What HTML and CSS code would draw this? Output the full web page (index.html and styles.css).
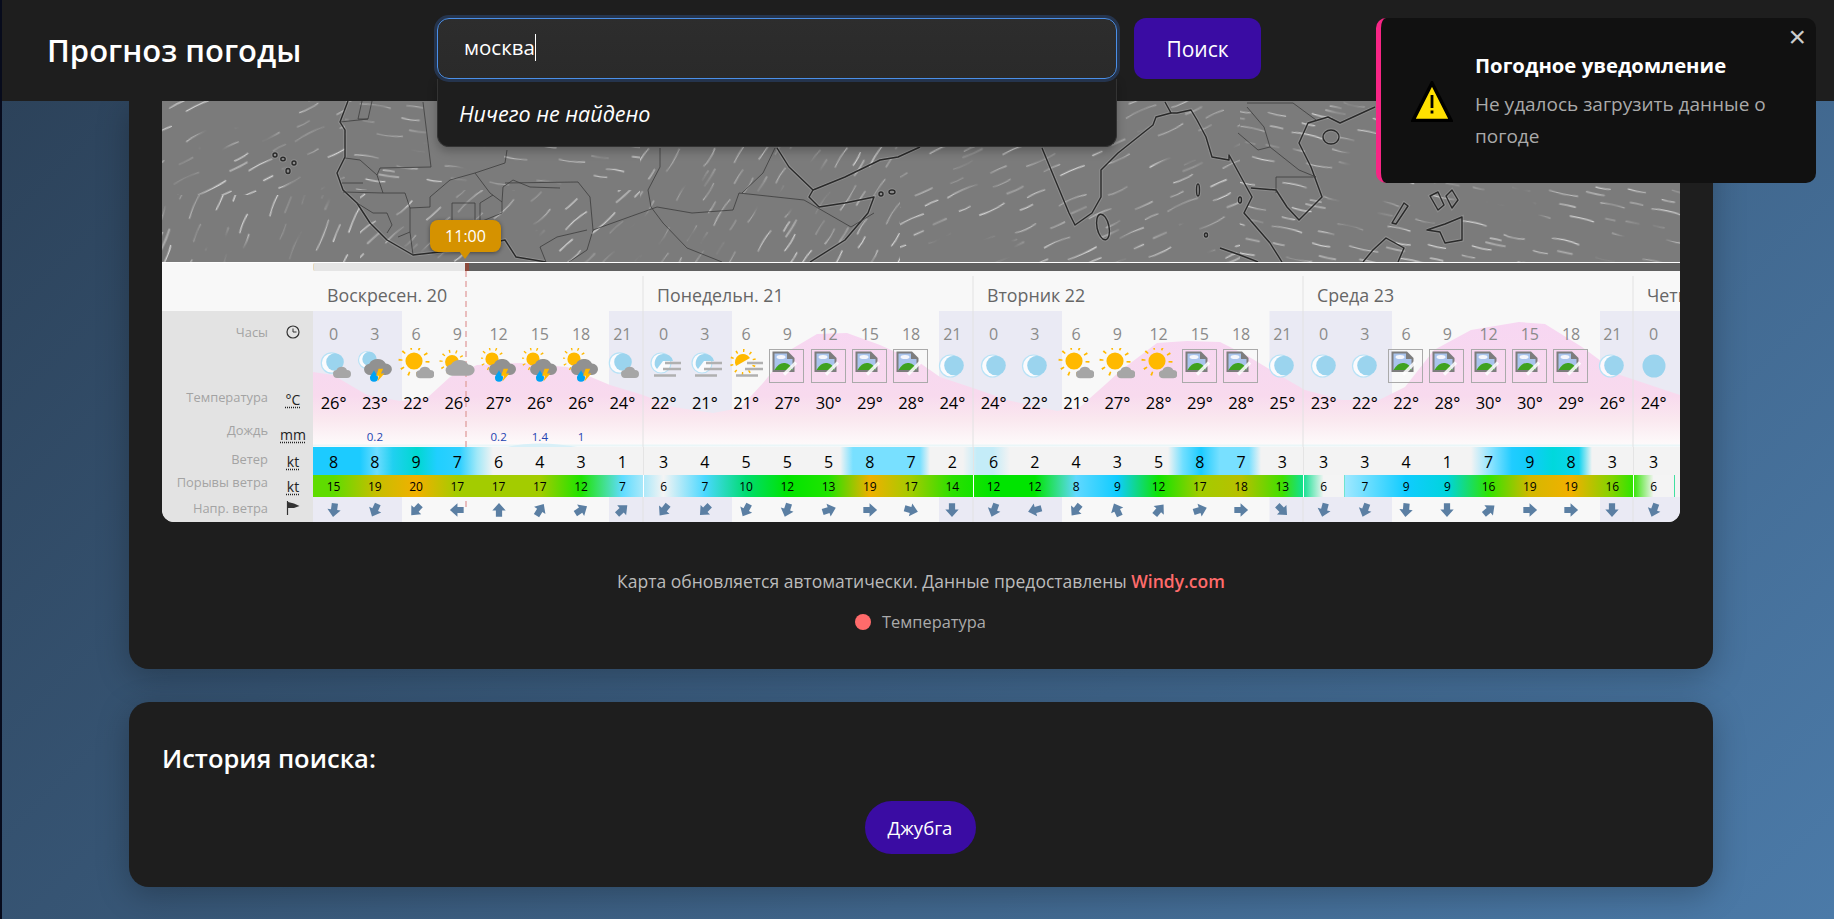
FILE: index.html
```html
<!DOCTYPE html>
<html lang="ru">
<head>
<meta charset="utf-8">
<title>Прогноз погоды</title>
<link rel="stylesheet" href="styles.css">
</head>
<body>
<svg class="defs" width="0" height="0" aria-hidden="true">
  <defs>
    <path id="cl" d="M4 13a4 4 0 0 1-.6-7.95A6 6 0 0 1 14 5a4 4 0 0 1 0 8z" fill="#a6a6a6"/>
    <path id="cl2" d="M4 13a4 4 0 0 1-.6-7.95A6 6 0 0 1 14 5a4 4 0 0 1 0 8z" fill="#919191"/>
    <g id="sun">
      <circle r="6.6" fill="#ffb900"/>
      <circle r="10.4" fill="none" stroke="#ffb900" stroke-width="3" stroke-dasharray="1.3 5.23"/>
    </g>
    <g id="mo">
      <circle cx="15.5" cy="15" r="10.2" fill="#fff" fill-opacity=".8" stroke="#b8e2f6" stroke-width="1.2"/>
      <circle cx="19" cy="14" r="8.8" fill="#9bd4ee"/>
    </g>
    <g id="rb">
      <path d="M0 0C1 3 3.5 4.5 3.5 6.8a3.5 3.5 0 0 1-7 0C-3.500 4.500-1 3 0 0z" fill="#00a2f2"/>
      <path d="M8-1H4L1.800 5H4.300L3 10 9 3H6z" fill="#ffb900"/>
    </g>
    <symbol id="nc" viewBox="0 0 36 36"><use href="#mo"/><use href="#cl" transform="translate(17 17)"/></symbol>
    <symbol id="nrb" viewBox="0 0 36 36">
      <circle cx="10" cy="12" r="8.500" fill="#fff" fill-opacity=".8" stroke="#b8e2f6" stroke-width="1.2"/>
      <circle cx="12.500" cy="11" r="7.200" fill="#9bd4ee"/>
      <use href="#cl2" transform="translate(7 8.500) scale(1.55 1.42)"/>
      <use href="#rb" transform="translate(17 22) scale(1.15)"/>
    </symbol>
    <symbol id="sc" viewBox="0 0 36 36"><use href="#sun" transform="translate(16 13) scale(1.3)"/><use href="#cl" transform="translate(18 17) scale(1.02)"/></symbol>
    <symbol id="sC" viewBox="0 0 36 36"><use href="#sun" transform="translate(13 14) scale(1.05)"/><use href="#cl" transform="translate(6.500 9.500) scale(1.62 1.4)"/></symbol>
    <symbol id="src" viewBox="0 0 36 36">
      <use href="#sun" transform="translate(11 11) scale(1)"/>
      <use href="#cl2" transform="translate(8 8.500) scale(1.5 1.42)"/>
      <use href="#rb" transform="translate(18 22) scale(1.15)"/>
    </symbol>
    <g id="fog" stroke="#b0b0b0" stroke-width="2.400" fill="none">
      <path d="M19 15H35M17 21H35M8 27.500H30"/>
    </g>
    <symbol id="nf" viewBox="0 0 36 36">
      <circle cx="15" cy="15" r="10" fill="#fff" fill-opacity=".8" stroke="#b8e2f6" stroke-width="1.2"/>
      <path d="M17 6a9 9 0 0 1 10 7H17l-6 8a9 9 0 0 1 6-15z" fill="#9bd4ee"/>
      <use href="#fog"/>
    </symbol>
    <symbol id="sf" viewBox="0 0 36 36">
      <g transform="translate(15 14)">
        <path d="M-7 4A8 8 0 1 1 7-4z" fill="#ffb900"/>
        <circle r="11.500" fill="none" stroke="#ffb900" stroke-width="3" stroke-dasharray="1.500 5.730" stroke-dashoffset="4"/>
      </g>
      <use href="#fog"/>
    </symbol>
    <symbol id="m" viewBox="0 0 36 36">
      <circle cx="16.500" cy="18" r="11" fill="#fff" fill-opacity=".8" stroke="#b8e2f6" stroke-width="1.200"/>
      <circle cx="20" cy="17.500" r="9.800" fill="#9bd4ee"/>
    </symbol>
    <symbol id="f" viewBox="0 0 36 36"><circle cx="18" cy="18" r="11.500" fill="#9bd4ee"/></symbol>
    <symbol id="br" viewBox="0 0 36 36">
      <rect x=".5" y="1.500" width="34" height="33" fill="none" stroke="#aaa"/>
      <path d="M3.500 3.500H19L25.500 10V24H3.500z" fill="#7d7d7d"/>
      <path d="M5.500 5.500H18V11H23.500V22H5.500z" fill="#a9c4ec"/>
      <ellipse cx="12" cy="9" rx="4.500" ry="2" fill="#f4f6fb"/>
      <path d="M5.500 22Q10 14 16 15T23.500 22z" fill="#3fa21f"/>
      <path d="M27 14.500L15 26.500" stroke="#fff" stroke-opacity=".85" stroke-width="3.200"/>
    </symbol>
    <path id="a" d="M9 1L16.500 9.500H12.500V16.500H5.500V9.500H1.500z" fill="#5b7fa3"/>
    <pattern id="st" width="230" height="120" patternUnits="userSpaceOnUse">
      <g fill="none" stroke="#fff" stroke-linecap="round" stroke-width="1.500" stroke-opacity=".68">
        <path d="M6 10q16-2 30 0"/><path d="M60 16q12 3 26 0"/><path d="M120 8q18-3 34 1"/><path d="M178 20q10 2 24 0"/>
        <path d="M24 38q14 2 24 0"/><path d="M84 46q18-2 32 1"/><path d="M146 36q14-2 28 0"/><path d="M200 48q12 1 22 0"/>
        <path d="M4 66q20-3 38 0"/><path d="M58 76q12 2 22 0"/><path d="M104 70q18 2 36 0"/><path d="M170 72q14-2 30 0"/>
        <path d="M30 100q16 2 32-1"/><path d="M90 104q10-2 22 0"/><path d="M136 96q18-1 30 1"/><path d="M192 106q12 2 28 0"/>
        <path d="M44 24q10-1 14 0"/><path d="M100 28q8 1 18 0"/><path d="M160 54q10 1 18-1"/><path d="M14 52q8 1 16 0"/><path d="M62 60q12-1 20 0"/><path d="M206 64q8-1 16 0"/>
        <path d="M10 86q8 1 14 0"/><path d="M120 84q10-1 20 0"/><path d="M180 90q6 0 12 0"/><path d="M76 114q8 1 16 0"/>
      </g>
      <g fill="none" stroke="#fff" stroke-linecap="round" stroke-width="2.400" stroke-opacity=".38">
        <path d="M40 30q14 1 24 0"/><path d="M150 62q14 1 22 0"/><path d="M70 90q12 1 20 0"/><path d="M206 88q8 0 16 0"/><path d="M130 22q10 0 18 0"/>
      </g>
    </pattern>
    <pattern id="p1" href="#st" patternTransform="rotate(-27) scale(.85)"/>
    <pattern id="p2" href="#st" patternTransform="rotate(-68) scale(.9)"/>
    <pattern id="p3" href="#st" patternTransform="rotate(8) scale(.8)"/>
    <pattern id="p4" href="#st" patternTransform="rotate(-42) scale(.85)"/>
    <pattern id="p5" href="#st" patternTransform="rotate(-58) scale(.8)"/>
    <pattern id="p6" href="#st" patternTransform="rotate(-24) scale(.85)"/>
    <pattern id="p7" href="#st" patternTransform="rotate(12) scale(.8)"/>
    <filter id="soft" x="0" y="0" width="1" height="1" color-interpolation-filters="sRGB">
      <feTurbulence type="fractalNoise" baseFrequency=".018" numOctaves="2" seed="4" result="n"/>
      <feColorMatrix in="n" type="matrix" values="0 0 0 0 0  0 0 0 0 0  0 0 0 0 0  3.200 0 0 0 -1" result="mask"/>
      <feComposite in="SourceGraphic" in2="mask" operator="in"/>
      <feGaussianBlur stdDeviation=".5"/>
    </filter>
    <g id="coast" fill="none">
      <path d="M348 101L340 122 345 130 345 157 337 173 343 190 357 203 370 223 387 240 413 255 457 250 505 240 516 257 546 262"/>
      <path d="M777 148L789 167 813 190 809 197 819 207 845 203 874 197 868 213 845 240 810 262"/>
      <path d="M813 190L845 177 880 160 898 157 920 147"/>
      <path d="M1165 102L1171 113 1156 117 1153 125 1118 153 1101 170 1101 197 1092 213 1075 225 1069 213 1054 177 1042 148"/>
      <path d="M1171 113L1177 113 1191 110 1197 120 1206 137 1212 157 1229 160 1229 155 1241 177 1252 197 1244 213 1270 243 1282 262"/>
      <path d="M1251 188L1276 190 1287 207 1299 220 1322 197 1311 167 1299 143 1308 123 1328 117 1340 123 1375 107"/>
      <ellipse cx="1103" cy="227" rx="6" ry="13" transform="rotate(-12 1103 227)"/>
      <ellipse cx="1331" cy="137" rx="8" ry="7"/>
      <path d="M1220 248L1240 255 1258 262"/>
      <path d="M1363 262L1373 250 1386 238 1404 248 1398 262"/>
      <path d="M1427 230L1445 224 1462 217 1462 240 1445 243 1440 232z"/>
      <path d="M1404 203L1392 223 1396 224 1408 206z"/>
      <path d="M1430 196L1438 210 1444 205 1438 192z"/><path d="M1446 196L1452 208 1458 200 1452 190z"/>
      <ellipse cx="275" cy="155" rx="2" ry="2"/><ellipse cx="283" cy="159" rx="2.200" ry="1.800"/><ellipse cx="294" cy="163" rx="2" ry="2"/><ellipse cx="288" cy="171" rx="2" ry="2.500"/>
      <ellipse cx="892" cy="192" rx="3" ry="2"/><ellipse cx="881" cy="194" rx="2" ry="2"/>
      <ellipse cx="1198" cy="190" rx="1.500" ry="6"/><ellipse cx="1240" cy="200" rx="1.500" ry="3"/><ellipse cx="1206" cy="235" rx="1.500" ry="2"/>
    </g>
    <g id="borders" fill="none">
      <path d="M423 102L431 167 380 168 377 175 383 193 405 193 410 208 410 232 398 237"/>
      <path d="M345 158L360 160 377 175"/><path d="M342 183L363 183"/><path d="M343 192L383 193"/>
      <path d="M357 203L373 213 387 213 392 225 387 233"/>
      <path d="M410 208L430 207 430 197 450 180 475 173 490 193 502 202 502 213 480 222 480 203 493 195"/>
      <path d="M507 150L505 163 475 173"/>
      <path d="M502 202L503 187 513 180 530 187 560 188"/>
      <path d="M452 220L452 203 475 203 475 220"/><path d="M413 255L410 232"/>
      <path d="M505 183L578 182 590 197 593 230 587 250 569 262"/>
      <path d="M593 230L657 207 692 213 733 210 739 193 804 200"/>
      <path d="M660 148L660 167 648 190 651 207 663 223 687 248 722 262"/>
      <path d="M775 148L763 173 742 193"/><path d="M804 200L851 227 874 213"/>
      <path d="M546 262L540 247 557 237 587 230"/>
      <path d="M340 122L368 119 372 101"/><path d="M368 119L358 119 362 101"/>
      <path d="M1238 133L1258 150 1270 147 1264 127 1247 107"/>
      <path d="M1270 147L1299 170 1316 177 1276 177 1276 193"/>
      <path d="M1247 103L1293 103 1316 120"/>
    </g>
  </defs>
</svg>

<div class="page">
  <header class="header">
    <h1 class="title">Прогноз погоды</h1>
    <div class="search">
      <div class="input" role="textbox"><span class="typed">москва</span></div>
      <div class="drop">Ничего не найдено</div>
    </div>
    <button class="go">Поиск</button>
  </header>

  <aside class="toast">
    <svg class="warn" viewBox="0 0 42 41"><path d="M21 2L40 39.500H2z" fill="#ffe000" stroke="#000" stroke-width="3.500" stroke-linejoin="miter"/><path d="M19.600 14h2.800v13h-2.800zM19.600 29.500h2.800v3h-2.800z" fill="#000"/></svg>
    <div class="toast-body">
      <div class="toast-title">Погодное уведомление</div>
      <div class="toast-text">Не удалось загрузить данные о погоде</div>
    </div>
    <span class="close">×</span>
  </aside>

  <main class="main">
    <section class="card card-map">
      <div class="widget">
        <div class="map">
          <svg class="map-svg" viewBox="162 101 1518 161" width="1518" height="161">
            <rect x="162" y="101" width="1518" height="161" fill="#7b7b7b"/>
            <g filter="url(#soft)">
              <rect x="162" y="101" width="183" height="94" fill="url(#p1)"/>
              <rect x="162" y="195" width="198" height="67" fill="url(#p2)"/>
              <rect x="345" y="101" width="295" height="89" fill="url(#p3)"/>
              <rect x="360" y="190" width="280" height="72" fill="url(#p4)"/>
              <rect x="640" y="101" width="260" height="161" fill="url(#p5)"/>
              <rect x="900" y="101" width="340" height="161" fill="url(#p6)"/>
              <rect x="1240" y="101" width="440" height="161" fill="url(#p7)"/>
            </g>
            <use href="#coast" stroke="#fff" stroke-opacity=".14" stroke-width="3.500"/>
            <use href="#coast" stroke="#2a2a2a" stroke-width="1.400" stroke-linejoin="round"/>
            <use href="#borders" stroke="#3c3c3c" stroke-width=".8" stroke-linejoin="round"/>
          </svg>
          <div class="bubble">11:00</div>
        </div>
        <div class="timebar"><i class="tb-side"></i><i class="tb-past"></i><i class="tb-now"></i><i class="tb-rest"></i></div>
        <div class="mgram">
          <svg class="mg-bg" viewBox="0 0 1367 251" width="1367" height="251">
            <defs>
              <linearGradient id="pk" gradientUnits="userSpaceOnUse" x1="0" y1="40" x2="0" y2="176">
                <stop offset="0" stop-color="#f7d6f3"/><stop offset=".62" stop-color="#f8daee"/><stop offset=".8" stop-color="#fae8ef"/><stop offset="1" stop-color="#fefcfc"/>
              </linearGradient>
            </defs>
            <g fill="#eaeaf4">
              <rect x="0" y="40" width="89" height="136"/><rect x="296" y="40" width="123" height="136"/><rect x="626" y="40" width="123" height="136"/><rect x="956.500" y="40" width="122.500" height="136"/><rect x="1287" y="40" width="80" height="136"/>
              <rect x="0" y="226" width="89" height="25"/><rect x="296" y="226" width="123" height="25"/><rect x="626" y="226" width="123" height="25"/><rect x="956.500" y="226" width="122.500" height="25"/><rect x="1287" y="226" width="80" height="25"/>
            </g>
            <path fill="url(#pk)" d="M0 101L20 104 54 124 87 130 114 127 137 106 164 94 207 92 254 96 297 114 330 124 360 136 400 142 427 137 450 112 477 79 504 63 534 62 567 74 607 92 627 106 660 117 694 129 744 140 767 136 794 112 807 100 844 72 874 70 907 71 933 84 966 104 992 119 1029 129 1066 129 1092 116 1121 79 1158 59 1206 51 1232 53 1269 76 1307 104 1367 124V176H0z"/>
            <path d="M0 174.500H1367" stroke="#eaf6f8" stroke-width="2"/>
            <path d="M194 176Q226 169 264 176z" fill="#d8f0f8"/>
            <path d="M330 5V251M660 5V251M990 5V251M1320 5V251" stroke="#e2e2e2" fill="none"/>
            <path d="M153 0V240" stroke="#e3a9a9" stroke-width="1.500" stroke-dasharray="6 4"/>
          </svg>
          <div class="mg-row mg-days"><span class="lab-col"></span><span class="day">Воскресен. 20</span><span class="day">Понедельн. 21</span><span class="day">Вторник 22</span><span class="day">Среда 23</span><span class="day">Четверг 24</span></div>
          <div class="mg-body">
            <div class="lab-col labels">
              <div class="lab l-h"><span class="lab-t">Часы</span><span class="unit"><svg width="16" height="16" viewBox="0 0 16 16"><circle cx="8" cy="8" r="6" fill="none" stroke="#333" stroke-width="1.200"/><path d="M8 4.500V8H11.500" fill="none" stroke="#333"/></svg></span></div>
              <div class="lab l-i"></div>
              <div class="lab l-t"><span class="lab-t">Температура</span><span class="unit u-d">°C</span></div>
              <div class="lab l-r"><span class="lab-t">Дождь</span><span class="unit u-d">mm</span></div>
              <div class="lab l-w"><span class="lab-t">Ветер</span><span class="unit u-d">kt</span></div>
              <div class="lab l-g"><span class="lab-t">Порывы ветра</span><span class="unit u-d">kt</span></div>
              <div class="lab l-a"><span class="lab-t">Напр. ветра</span><span class="unit"><svg width="16" height="16" viewBox="0 0 16 16"><path d="M2.500 1V15" stroke="#333" stroke-width="1.200"/><path d="M3 2L9 3.500 14.500 6 9 8 3 8z" fill="#333"/></svg></span></div>
            </div>
            <div class="cols">
              <div class="row r-h"><span>0</span><span>3</span><span>6</span><span>9</span><span>12</span><span>15</span><span>18</span><span>21</span><span>0</span><span>3</span><span>6</span><span>9</span><span>12</span><span>15</span><span>18</span><span>21</span><span>0</span><span>3</span><span>6</span><span>9</span><span>12</span><span>15</span><span>18</span><span>21</span><span>0</span><span>3</span><span>6</span><span>9</span><span>12</span><span>15</span><span>18</span><span>21</span><span>0</span></div>
              <div class="row r-i">
                <span><svg><use href="#nc"/></svg></span><span><svg><use href="#nrb"/></svg></span><span><svg><use href="#sc"/></svg></span><span><svg><use href="#sC"/></svg></span><span><svg><use href="#src"/></svg></span><span><svg><use href="#src"/></svg></span><span><svg><use href="#src"/></svg></span><span><svg><use href="#nc"/></svg></span>
                <span><svg><use href="#nf"/></svg></span><span><svg><use href="#nf"/></svg></span><span><svg><use href="#sf"/></svg></span><span><svg><use href="#br"/></svg></span><span><svg><use href="#br"/></svg></span><span><svg><use href="#br"/></svg></span><span><svg><use href="#br"/></svg></span><span><svg><use href="#m"/></svg></span>
                <span><svg><use href="#m"/></svg></span><span><svg><use href="#m"/></svg></span><span><svg><use href="#sc"/></svg></span><span><svg><use href="#sc"/></svg></span><span><svg><use href="#sc"/></svg></span><span><svg><use href="#br"/></svg></span><span><svg><use href="#br"/></svg></span><span><svg><use href="#m"/></svg></span>
                <span><svg><use href="#m"/></svg></span><span><svg><use href="#m"/></svg></span><span><svg><use href="#br"/></svg></span><span><svg><use href="#br"/></svg></span><span><svg><use href="#br"/></svg></span><span><svg><use href="#br"/></svg></span><span><svg><use href="#br"/></svg></span><span><svg><use href="#m"/></svg></span>
                <span><svg><use href="#f"/></svg></span>
              </div>
              <div class="row r-t"><span>26°</span><span>23°</span><span>22°</span><span>26°</span><span>27°</span><span>26°</span><span>26°</span><span>24°</span><span>22°</span><span>21°</span><span>21°</span><span>27°</span><span>30°</span><span>29°</span><span>28°</span><span>24°</span><span>24°</span><span>22°</span><span>21°</span><span>27°</span><span>28°</span><span>29°</span><span>28°</span><span>25°</span><span>23°</span><span>22°</span><span>22°</span><span>28°</span><span>30°</span><span>30°</span><span>29°</span><span>26°</span><span>24°</span></div>
              <div class="row r-r"><span></span><span>0.2</span><span></span><span></span><span>0.2</span><span>1.4</span><span>1</span></div>
              <div class="row r-w"><span>8</span><span>8</span><span>9</span><span>7</span><span>6</span><span>4</span><span>3</span><span>1</span><span class="ds">3</span><span>4</span><span>5</span><span>5</span><span>5</span><span>8</span><span>7</span><span>2</span><span class="ds">6</span><span>2</span><span>4</span><span>3</span><span>5</span><span>8</span><span>7</span><span>3</span><span class="ds">3</span><span>3</span><span>4</span><span>1</span><span>7</span><span>9</span><span>8</span><span>3</span><span class="ds">3</span></div>
              <div class="row r-g"><span>15</span><span>19</span><span>20</span><span>17</span><span>17</span><span>17</span><span>12</span><span>7</span><span class="ds">6</span><span>7</span><span>10</span><span>12</span><span>13</span><span>19</span><span>17</span><span>14</span><span class="ds">12</span><span>12</span><span>8</span><span>9</span><span>12</span><span>17</span><span>18</span><span>13</span><span class="ds">6</span><span>7</span><span>9</span><span>9</span><span>16</span><span>19</span><span>19</span><span>16</span><span class="ds">6</span></div>
              <div class="row r-a">
                <span><svg viewBox="0 0 18 18"><use href="#a" transform="rotate(188 9 9)"/></svg></span><span><svg viewBox="0 0 18 18"><use href="#a" transform="rotate(205 9 9)"/></svg></span><span><svg viewBox="0 0 18 18"><use href="#a" transform="rotate(222 9 9)"/></svg></span><span><svg viewBox="0 0 18 18"><use href="#a" transform="rotate(270 9 9)"/></svg></span><span><svg viewBox="0 0 18 18"><use href="#a"/></svg></span><span><svg viewBox="0 0 18 18"><use href="#a" transform="rotate(32 9 9)"/></svg></span><span><svg viewBox="0 0 18 18"><use href="#a" transform="rotate(58 9 9)"/></svg></span><span><svg viewBox="0 0 18 18"><use href="#a" transform="rotate(48 9 9)"/></svg></span>
                <span><svg viewBox="0 0 18 18"><use href="#a" transform="rotate(218 9 9)"/></svg></span><span><svg viewBox="0 0 18 18"><use href="#a" transform="rotate(225 9 9)"/></svg></span><span><svg viewBox="0 0 18 18"><use href="#a" transform="rotate(208 9 9)"/></svg></span><span><svg viewBox="0 0 18 18"><use href="#a" transform="rotate(198 9 9)"/></svg></span><span><svg viewBox="0 0 18 18"><use href="#a" transform="rotate(72 9 9)"/></svg></span><span><svg viewBox="0 0 18 18"><use href="#a" transform="rotate(90 9 9)"/></svg></span><span><svg viewBox="0 0 18 18"><use href="#a" transform="rotate(105 9 9)"/></svg></span><span><svg viewBox="0 0 18 18"><use href="#a" transform="rotate(180 9 9)"/></svg></span>
                <span><svg viewBox="0 0 18 18"><use href="#a" transform="rotate(200 9 9)"/></svg></span><span><svg viewBox="0 0 18 18"><use href="#a" transform="rotate(255 9 9)"/></svg></span><span><svg viewBox="0 0 18 18"><use href="#a" transform="rotate(218 9 9)"/></svg></span><span><svg viewBox="0 0 18 18"><use href="#a" transform="rotate(335 9 9)"/></svg></span><span><svg viewBox="0 0 18 18"><use href="#a" transform="rotate(40 9 9)"/></svg></span><span><svg viewBox="0 0 18 18"><use href="#a" transform="rotate(72 9 9)"/></svg></span><span><svg viewBox="0 0 18 18"><use href="#a" transform="rotate(90 9 9)"/></svg></span><span><svg viewBox="0 0 18 18"><use href="#a" transform="rotate(135 9 9)"/></svg></span>
                <span><svg viewBox="0 0 18 18"><use href="#a" transform="rotate(195 9 9)"/></svg></span><span><svg viewBox="0 0 18 18"><use href="#a" transform="rotate(200 9 9)"/></svg></span><span><svg viewBox="0 0 18 18"><use href="#a" transform="rotate(185 9 9)"/></svg></span><span><svg viewBox="0 0 18 18"><use href="#a" transform="rotate(180 9 9)"/></svg></span><span><svg viewBox="0 0 18 18"><use href="#a" transform="rotate(50 9 9)"/></svg></span><span><svg viewBox="0 0 18 18"><use href="#a" transform="rotate(90 9 9)"/></svg></span><span><svg viewBox="0 0 18 18"><use href="#a" transform="rotate(90 9 9)"/></svg></span><span><svg viewBox="0 0 18 18"><use href="#a" transform="rotate(180 9 9)"/></svg></span>
                <span><svg viewBox="0 0 18 18"><use href="#a" transform="rotate(200 9 9)"/></svg></span>
              </div>
            </div>
          </div>
        </div>
      </div>
      <p class="note">Карта обновляется автоматически. Данные предоставлены <a class="link">Windy.com</a></p>
      <div class="legend"><i class="dot"></i><span>Температура</span></div>
    </section>

    <section class="card card-hist">
      <h2 class="hist-title">История поиска:</h2>
      <div class="chips"><button class="chip">Джубга</button></div>
    </section>
  </main>
</div>
</body>
</html>
```
FILE: styles.css
```css
* { box-sizing: border-box; }
html, body { margin: 0; padding: 0; height: 919px; overflow: hidden; }
body {
  font-family: "Open Sans", "Noto Sans", sans-serif;
  color: #fff;
  background: linear-gradient(135deg, #2b4057 0%, #4b7aa8 100%);
}
.defs { position: absolute; }
.page { border-left: 2px solid #070b1c; height: 919px; }

.header {
  height: 101px;
  background: #1e1e1e;
  padding: 18px 0 0 45px;
  display: flex;
  align-items: flex-start;
  position: relative;
  z-index: 5;
}
.title { width: 390px; margin: 0; font-size: 31px; font-weight: 600; line-height: 65px; white-space: nowrap; }
.search { position: relative; width: 680px; }
.input {
  height: 61px;
  background: linear-gradient(180deg, #2d2d2d, #2a2a2a);
  border: 1px solid #4a8fe8;
  border-radius: 12px;
  box-shadow: 0 0 0 3px rgba(58, 110, 200, .28);
  padding-left: 26px;
  font-size: 20.500px;
  line-height: 57px;
  position: relative;
  z-index: 2;
}
.typed { border-right: 1px solid #fff; display: inline-block; line-height: 26px; height: 27px; }
.drop {
  height: 68px;
  background: #1e1e1e;
  border: 1px solid #333;
  border-top: 0;
  border-radius: 0 0 12px 12px;
  font-style: italic;
  font-size: 21.500px;
  line-height: 70px;
  padding-left: 21px;
  box-shadow: 0 4px 10px rgba(0, 0, 0, .25);
  position: absolute;
  left: 0; right: 0; top: 61px;
}
.go {
  width: 127px; height: 61px; margin-left: 17px;
  background: #3a0ca3; color: #fff;
  border: 0; border-radius: 12px;
  font: 500 21px "Open Sans", sans-serif;
}

.toast {
  position: absolute;
  top: 18px; left: 1376px;
  width: 440px; height: 165px;
  z-index: 6;
  background: #111;
  border-left: 5px solid #f72585;
  border-radius: 10px;
  display: flex;
  align-items: flex-start;
  padding: 35px 0 0 30px;
}
.warn { width: 42px; height: 41px; margin-top: 28px; flex: none; }
.toast-body { margin-left: 22px; width: 320px; }
.toast-title { font-size: 20.300px; font-weight: 700; line-height: 24px; }
.toast-text { color: #aaa; font-size: 19px; line-height: 32px; margin-top: 11px; }
.close { position: absolute; top: 3px; right: 10px; color: #ccc; font: 400 30px/32px "Liberation Sans", sans-serif; }

.main { padding: 0 121px 0 127px; }
.card { background: #1e1e1e; border-radius: 20px; padding: 0 33px; box-shadow: 0 8px 32px rgba(0, 0, 0, .25); }
.card-map { height: 568px; border-radius: 0 0 20px 20px; }
.card-hist { height: 185px; margin-top: 33px; padding-top: 38px; }

.widget { width: 1518px; height: 421px; background: #f8f8f8; border-radius: 0 0 12px 12px; overflow: hidden; }
.map { position: relative; height: 161px; }
.map-svg { display: block; }
.bubble {
  position: absolute; left: 268px; top: 119px;
  width: 71px; height: 32px;
  background: #d59200; color: #fff;
  border-radius: 8px;
  font-size: 16px; line-height: 33px; text-align: center;
  box-shadow: 0 1px 4px rgba(0, 0, 0, .45);
}
.bubble::after {
  content: ""; position: absolute; left: 29px; top: 31px;
  border: 6px solid transparent; border-top: 8px solid #d59200; border-bottom: 0;
}
.timebar { display: flex; height: 9px; border-top: 1px solid #fff; }
.timebar i { display: block; height: 8px; }
.tb-side { width: 151px; }
.tb-past { width: 152px; background: #e5e5e5; border-left: 1px solid #e8d8b8; border-radius: 2px 0 0 2px; }
.tb-now { width: 4px; background: #8c4a3c; }
.tb-rest { flex: 1; background: #616161; }

.mgram { position: relative; height: 251px; }
.mg-bg { position: absolute; left: 151px; top: 0; display: block; }
.mg-row, .mg-body { position: relative; display: flex; }
.mg-days { height: 40px; white-space: nowrap; overflow: hidden; }
.lab-col { width: 151px; flex: none; }
.day { width: 330px; flex: none; padding-left: 14px; color: #666; font-size: 17.800px; line-height: 48px; }
.labels { background: #e3e3e3; border-radius: 0 0 0 12px; height: 211px; }
.lab { display: flex; align-items: center; height: 25px; }
.lab-t { flex: 1; text-align: right; color: #a3a3a3; font-size: 12.900px; white-space: nowrap; position: relative; }
.unit { width: 38px; margin: 0 1px 0 6px; text-align: center; color: #222; font-size: 14px; display: flex; justify-content: center; align-items: center; }
.u-d { text-decoration: underline dotted #222; text-underline-offset: 2px; }
.l-h { height: 37px; padding-top: 4px; }
.l-i { height: 36px; }
.l-t { height: 38px; padding-bottom: 8px; }
.l-t .lab-t { top: -2px; }
.l-r { height: 25px; padding-bottom: 1px; }
.l-r .lab-t { top: -4px; }
.l-w { height: 28px; }
.l-w .lab-t { top: -2px; }
.l-g { height: 22px; }
.l-g .lab-t { top: -4px; }
.l-a { height: 25px; padding-bottom: 3px; }

.cols { width: 1367px; flex: none; overflow: hidden; }
.row { display: flex; width: 1367px; text-align: center; }
.row span { width: 41.250px; flex: none; display: block; }
.r-h { height: 37px; color: #8a8a8a; font-size: 16px; line-height: 46px; }
.r-i { height: 36px; }
.r-i span { display: flex; justify-content: center; }
.r-i svg { width: 36px; height: 36px; display: block; }
.r-t { height: 38px; color: #000; font-size: 16.500px; line-height: 38px; }
.r-r { height: 25px; color: #2443b0; font-size: 11.500px; line-height: 30px; }
.r-w {
  height: 28px; color: #000; font-size: 16px; line-height: 30px;
  background: linear-gradient(90deg,
    #1ccbff 47px, #6cdcff 64px, #20d0f0 80px, #00d8d0 104px, #20cfff 124px, #30d0ff 147px, #a0e8f8 164px, #f3f3f3 180px,
    #f3f3f3 527px, #78e0ff 540px, #78e0ff 607px, #f3f3f3 617px,
    #f3f3f3 650px, #c4ecf8 664px, #c4ecf8 680px, #f3f3f3 697px,
    #f3f3f3 855px, #70dfff 870px, #1ccbff 888px, #78e0ff 907px, #78e0ff 936px, #f3f3f3 948px,
    #f3f3f3 1158px, #90e4ff 1177px, #20ccff 1199px, #10ccf8 1218px, #00d8dc 1240px, #10d4f0 1266px, #f3f3f3 1279px);
}
.r-g {
  height: 22px; color: #000; font-size: 12px; line-height: 24px;
  background: linear-gradient(90deg,
    #5fdc00 20.600px, #c4bf00 61.900px, #f2b000 103.100px, #a3cc00 144.400px, #a3cc00 185.600px, #a3cc00 226.900px, #1ee400 268.100px, #5fdcff 309.400px,
    #f4f4f4 350.600px, #4ad8ff 391.900px, #00dc70 433.100px, #00e400 474.400px, #20e400 515.600px, #f0b000 556.900px, #a3cc00 598.100px, #2ae000 639.400px,
    #00e400 680.600px, #00e400 721.900px, #60d8ff 763.100px, #10ccff 804.400px, #10e400 845.600px, #a3cc00 886.900px, #b8c000 928.100px, #40e000 969.400px,
    #10e090 990px, #f4f4f4 1010.600px, #f4f4f4 1030.500px, #40e0a0 1031px, #a0e8ff 1032px, #10ccff 1093.100px, #00d4dc 1134.400px, #30e400 1175.600px, #d4b800 1216.900px, #f2b000 1258.100px, #80d400 1299.400px,
    #30e400 1320px, #f4f4f4 1340.600px, #f4f4f4 1360.500px, #40e0a0 1361px, #40e0a0 1362px, #f4f4f4 1362.500px);
}
.r-g .ds { box-shadow: inset 1px 0 #fff; }
.r-w .ds { box-shadow: inset 1px 0 #e4e4e4; }
.r-a { height: 25px; }
.r-a span { display: flex; justify-content: center; padding-top: 5px; }
.r-a svg { width: 16px; height: 16px; display: block; }

.note { margin: 47px 0 0; text-align: center; color: #bbb; font-size: 17.500px; line-height: 24px; }
.link { color: #ff6b6b; font-weight: 600; }
.legend { display: flex; justify-content: center; align-items: center; gap: 11px; margin-top: 17px; color: #aaa; font-size: 16.400px; line-height: 24px; padding-right: 1px; }
.dot { width: 16px; height: 16px; border-radius: 50%; background: #ff6b6b; display: block; }

.hist-title { margin: 0; font-size: 25.500px; font-weight: 600; line-height: 36px; }
.chips { display: flex; justify-content: center; margin-top: 25px; padding-right: 2px; }
.chip { width: 111px; height: 53px; border: 0; border-radius: 27px; background: #3a0ca3; color: #fff; font: 500 18.500px "Open Sans", sans-serif; }
```
